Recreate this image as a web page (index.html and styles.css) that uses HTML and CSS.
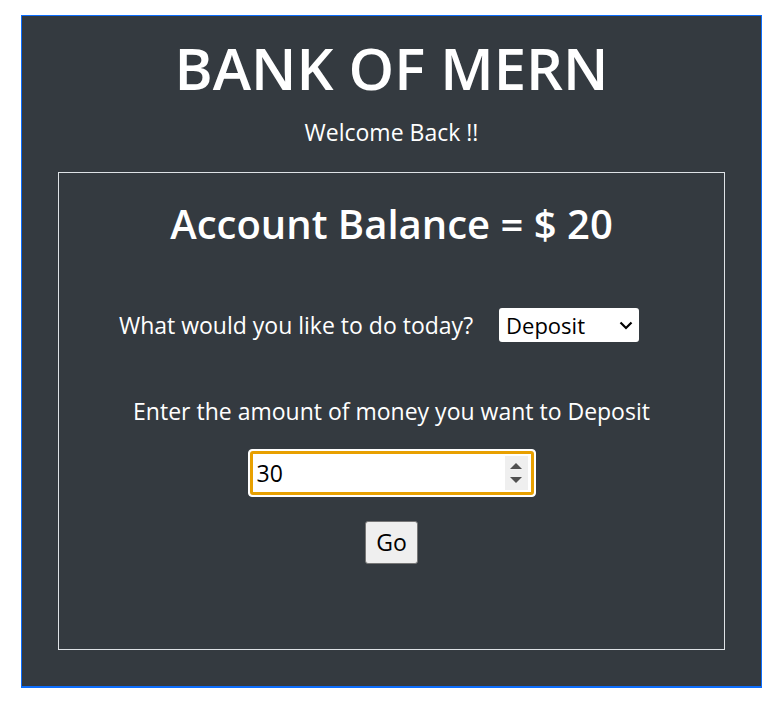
FILE: index.html
```html
<!DOCTYPE html>
<html>
<head>
<meta charset="utf-8">
<link rel="stylesheet" href="styles.css">
</head>
<body>
<div class="app">
  <h1 class="title">BANK OF MERN</h1>
  <p class="welcome">Welcome Back !!</p>
  <div class="card">
    <h2 class="balance">Account Balance = $ 20</h2>
    <div class="choice">
      <span class="choice-label">What would you like to do today?</span>
      <div class="select"><span>Deposit</span><svg width="14" height="9" viewBox="0 0 14 9"><path d="M1.5 1.5 L7 7 L12.5 1.5" fill="none" stroke="#000" stroke-width="2.2"/></svg></div>
    </div>
    <p class="prompt">Enter the amount of money you want to Deposit</p>
    <div class="input-ring">
      <div class="input">
        <span class="value">30</span>
        <div class="spin"><svg width="14" height="26" viewBox="0 0 14 26"><path d="M1 9 L7 3 L13 9 Z" fill="#505050"/><path d="M1 17 L7 23 L13 17 Z" fill="#505050"/></svg></div>
      </div>
    </div>
    <div class="btn-row"><button class="go">Go</button></div>
  </div>
</div>
</body>
</html>
```
FILE: styles.css
```css
html, body { margin: 0; padding: 0; background: #fff; }
body { font-family: "Open Sans", "Noto Sans", sans-serif; }
.app {
  margin: 15px 21px 0 21px;
  background: #343a40;
  border: 1px solid #0d6efd;
  border-bottom-width: 2px;
  color: #fff;
  text-align: center;
  padding: 20px 36px 36px;
}
.title {
  margin: 0;
  font-size: 58px;
  font-weight: 600;
  line-height: 64px;
}
.welcome {
  margin: 18px 0 0;
  font-size: 23px;
  line-height: 28px;
}
.card {
  margin-top: 26px;
  border: 1px solid #dee2e6;
  padding: 26px 0 85px;
}
.balance {
  margin: 0;
  font-size: 40px;
  font-weight: 600;
  line-height: 50px;
}
.choice {
  margin-top: 59px;
  display: flex;
  justify-content: center;
  align-items: center;
  gap: 26px;
}
.choice-label { font-size: 23px; line-height: 28px; }
.select {
  width: 140px;
  height: 34px;
  box-sizing: border-box;
  background: #fff;
  color: #000;
  border-radius: 3px;
  display: flex;
  align-items: center;
  justify-content: space-between;
  padding: 0 6px 0 7px;
  font-size: 22px;
  margin-right: 25px;
}
.prompt {
  margin: 55px 0 0;
  font-size: 23px;
  line-height: 28px;
}
.input-ring {
  margin: 24px auto 0;
  width: 288px;
  height: 48px;
  box-sizing: border-box;
  border: 1px solid #fff;
  border-radius: 4px;
  background: #fff;
  padding: 1px;
}
.input {
  height: 100%;
  box-sizing: border-box;
  border: 3px solid #e8a000;
  border-radius: 3px;
  display: flex;
  align-items: center;
  justify-content: space-between;
  padding: 0 3px 0 4px;
  color: #000;
  font-size: 23px;
}
.spin {
  width: 23px;
  height: 34px;
  background: #efefef;
  display: flex;
  align-items: center;
  justify-content: center;
}
.btn-row { margin-top: 24px; line-height: 0; }
.go {
  font-family: "Open Sans", "Noto Sans", sans-serif;
  font-size: 23px;
  line-height: 1;
  width: 53px;
  height: 43px;
  background: #efefef;
  border: 1px solid #767676;
  border-radius: 3px;
  color: #000;
  padding: 0;
}
```
